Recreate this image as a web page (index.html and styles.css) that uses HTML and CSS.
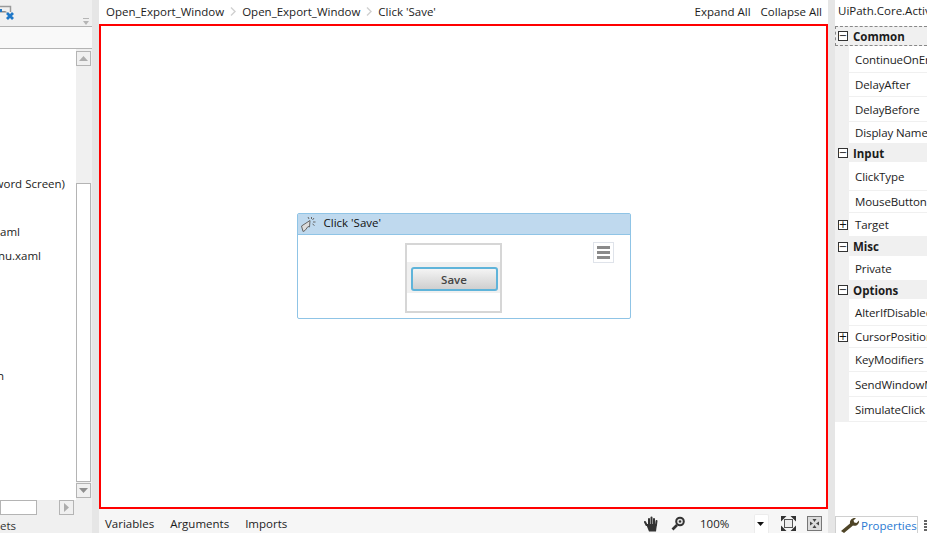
FILE: index.html
```html
<!DOCTYPE html>
<html lang="en">
<head>
  <meta charset="UTF-8" />
  <title>Click 'Save'</title>
  <link rel="stylesheet" href="styles.css">
</head>
<body>
  <div class="app">
    <!-- left panel, cut off by the screenshot -->
    <aside class="project">
      <div class="project-tools">
        <svg class="tool-icon" width="16" height="26" viewBox="0 0 16 26">
          <path d="M0 6.500H10.500V12" fill="none" stroke="#9a9a9a" stroke-width="1.500"/>
          <path d="M0 11h5l3 1.500H0z" fill="#8a8a8a"/>
          <path d="M7 13l6 6M13 13l-6 6" stroke="#1f78c8" stroke-width="2.800" fill="none"/>
          <rect x="0" y="9" width="2" height="3" fill="#1f78c8"/>
        </svg>
        <span class="tool-pin">
          <i></i>
          <svg width="6" height="4" viewBox="0 0 6 4"><path d="M0 0h6L3 4z" fill="#b5b5b5"/></svg>
        </span>
      </div>
      <div class="project-search"></div>
      <div class="project-body">
        <ul class="tree">
          <li></li>
          <li></li>
          <li></li>
          <li></li>
          <li></li>
          <li class="tree-cut cut-65">Keyword Screen)</li>
          <li></li>
          <li class="tree-cut cut-20">Menu.xaml</li>
          <li class="tree-cut cut-41">Main_Menu.xaml</li>
          <li></li>
          <li></li>
          <li></li>
          <li></li>
          <li class="tree-cut cut-4">Open</li>
        </ul>
        <div class="vscroll">
          <span class="scroll-btn"><svg width="9" height="5" viewBox="0 0 9 5"><path d="M4.500 0L9 5H0z" fill="#adadad"/></svg></span>
          <span class="vscroll-track"><span class="vscroll-thumb"></span></span>
          <span class="scroll-btn"><svg width="9" height="5" viewBox="0 0 9 5"><path d="M0 0h9L4.500 5z" fill="#8f8f8f"/></svg></span>
        </div>
      </div>
      <div class="hscroll">
        <span class="hscroll-thumb"></span>
        <span class="scroll-btn"><svg width="5" height="9" viewBox="0 0 5 9"><path d="M0 0l5 4.500L0 9z" fill="#adadad"/></svg></span>
      </div>
      <div class="project-tab tree-cut">Snippets</div>
    </aside>

    <div class="splitter"></div>

    <main class="designer">
      <header class="crumbs">
        <nav class="crumb-path">
          <span>Open_Export_Window</span>
          <svg width="6" height="9" viewBox="0 0 6 9"><path d="M1 .5l4 4-4 4" fill="none" stroke="#d0d0d0" stroke-width="1.400"/></svg>
          <span>Open_Export_Window</span>
          <svg width="6" height="9" viewBox="0 0 6 9"><path d="M1 .5l4 4-4 4" fill="none" stroke="#d0d0d0" stroke-width="1.400"/></svg>
          <span>Click 'Save'</span>
        </nav>
        <div class="crumb-actions">
          <span>Expand All</span>
          <span>Collapse All</span>
        </div>
      </header>

      <section class="canvas">
        <div class="activity">
          <div class="activity-head">
            <svg width="16" height="17" viewBox="0 0 16 17">
              <path d="M9 4.500L.5 10 2 15.500 4 14.500 7 10.500 8.500 11z" fill="#dcdcdc" stroke="#666" stroke-width="1"/>
              <path d="M10.500 1v2M13 2l-1.500 2M14.500 6h-2.500M13.500 9.500l-2-1.500M7 1l1 2" stroke="#666" stroke-width="1" fill="none"/>
            </svg>
            <span class="activity-title">Click 'Save'</span>
          </div>
          <div class="activity-body">
            <div class="preview">
              <div class="preview-band">
                <button class="save-btn">Save</button>
              </div>
            </div>
            <span class="activity-menu"><i></i><i></i><i></i></span>
          </div>
        </div>
      </section>

      <footer class="statusbar">
        <div class="status-tabs">
          <span>Variables</span>
          <span>Arguments</span>
          <span>Imports</span>
        </div>
        <div class="status-tools">
          <svg class="hand" width="14" height="16" viewBox="0 0 14 16">
            <path d="M2.500 9L1 6M5 8V3M7.500 8V1.500M10 8V3M12 9l.5-4" stroke="#333" stroke-width="2" stroke-linecap="round" fill="none"/>
            <path d="M2 8h11l-1 7.500H5z" fill="#333"/>
          </svg>
          <svg class="lens" width="14" height="15" viewBox="0 0 14 15">
            <circle cx="9" cy="5.500" r="3.800" fill="#e2e2e2" stroke="#333" stroke-width="2"/>
            <path d="M6 9l-4.500 4.500" stroke="#333" stroke-width="2.600"/>
            <circle cx="9" cy="5.500" r="1.200" fill="#333"/>
          </svg>
          <span class="zoom-value">100%</span>
          <span class="zoom-drop"><svg width="7" height="4" viewBox="0 0 7 4"><path d="M0 0h7L3.500 4z" fill="#111"/></svg></span>
          <svg class="fit" width="15" height="15" viewBox="0 0 15 15">
            <rect x="3.500" y="3.500" width="8" height="8" fill="#eee" stroke="#555" stroke-width="1"/>
            <path d="M0 0h5.500L0 5.500zM15 0v5.500L9.500 0zM0 15V9.500L5.500 15zM15 15H9.500L15 9.500z" fill="#333"/>
          </svg>
          <svg class="fit-actual" width="15" height="15" viewBox="0 0 15 15">
            <rect x=".5" y=".5" width="14" height="14" fill="#dcdcdc" stroke="#777"/>
            <path d="M7.500 6L5.500 3h4zM7.500 9l2 3h-4zM6 7.500L3 9.500v-4zM9 7.500l3-2v4z" fill="#444"/>
          </svg>
        </div>
      </footer>
    </main>

    <div class="splitter"></div>

    <aside class="props">
      <div class="props-title">UiPath.Core.Activities.Click</div>
      <div class="prop-grid">
        <div class="prop-head prop-head-focus"><span class="box">−</span>Common</div>
        <div class="prop">ContinueOnError</div>
        <div class="prop">DelayAfter</div>
        <div class="prop">DelayBefore</div>
        <div class="prop">Display Name</div>
        <div class="prop-head"><span class="box">−</span>Input</div>
        <div class="prop">ClickType</div>
        <div class="prop">MouseButton</div>
        <div class="prop prop-plus"><span class="box">+</span>Target</div>
        <div class="prop-head"><span class="box">−</span>Misc</div>
        <div class="prop">Private</div>
        <div class="prop-head"><span class="box">−</span>Options</div>
        <div class="prop">AlterIfDisabled</div>
        <div class="prop prop-plus"><span class="box">+</span>CursorPosition</div>
        <div class="prop">KeyModifiers</div>
        <div class="prop">SendWindowMessages</div>
        <div class="prop">SimulateClick</div>
      </div>
      <div class="props-tabs">
        <div class="props-tab">
          <svg width="20" height="16" viewBox="0 0 20 16">
            <path d="M1 14L10 6.500C9.500 3 12 .5 16 1l-2.500 2.500 .8 2 2.200.5L19 3.500C19.500 7.500 16 9.500 13 8.500L4 16z" fill="#4f4527"/>
          </svg>
          <span>Properties</span>
        </div>
        <svg class="next-tab" width="6" height="13" viewBox="0 0 6 13"><path d="M1 1h4M1 4h4M1 7h4M1 10h4" stroke="#333" stroke-width="1.500" fill="none"/></svg>
      </div>
    </aside>
  </div>
</body>
</html>
```

FILE: styles.css
```css
* {
  box-sizing: border-box;
}

html, body {
  margin: 0;
  height: 100%;
  overflow: hidden;
}

body {
  font-family: "Open Sans", "Noto Sans", Arial, sans-serif;
  font-size: 11.5px;
  color: #1c1c1c;
  background: #fff;
}

.app {
  display: grid;
  grid-template-columns: 92px 7px 729px 7px 92px;
  width: 927px;
  height: 533px;
}

.splitter {
  background: #e6e6e6;
}

/* left panel */
.project {
  display: flex;
  flex-direction: column;
  background: #f0f0f0;
  overflow: hidden;
}

.project-tools {
  display: flex;
  justify-content: space-between;
  align-items: flex-start;
  height: 27px;
  padding-right: 3px;
  border-bottom: 1px solid #b4b4b4;
}

.tool-pin {
  display: flex;
  flex-direction: column;
  align-items: center;
  gap: 2px;
  margin-top: 18px;
}

.tool-pin i {
  width: 6px;
  height: 1px;
  background: #b5b5b5;
}

.project-search {
  height: 22px;
  background: #f9f9f9;
  border-bottom: 1px solid #b4b4b4;
}

.project-body {
  display: flex;
  height: 451px;
  background: #f0f0f0;
}

.tree {
  flex: none;
  width: 76px;
  list-style: none;
  margin: 0;
  padding: 3px 0 0;
  background: #fff;
  overflow: hidden;
}

.tree li {
  height: 24px;
  line-height: 24px;
  white-space: nowrap;
}

.tree-cut {
  display: flex;
  justify-content: flex-end;
  white-space: nowrap;
}

.tree li.cut-65 { width: 65px; }
.tree li.cut-20 { width: 20px; }
.tree li.cut-41 { width: 41px; }
.tree li.cut-4 { width: 4px; }

.vscroll {
  display: flex;
  flex-direction: column;
  width: 15px;
  padding: 2px 0;
}

.scroll-btn {
  display: flex;
  align-items: center;
  justify-content: center;
  flex: none;
  width: 15px;
  height: 15px;
  background: #f0f0f0;
  border: 1px solid #b4b4b4;
}

.vscroll-track {
  flex: 1;
  display: flex;
  flex-direction: column;
  justify-content: flex-end;
  padding-bottom: 1px;
}

.vscroll-thumb {
  width: 15px;
  height: 299px;
  background: #fff;
  border: 1px solid #b4b4b4;
}

.hscroll {
  display: flex;
  justify-content: space-between;
  align-items: center;
  height: 15px;
  padding-right: 18px;
}

.hscroll-thumb {
  width: 37px;
  height: 15px;
  background: #fff;
  border: 1px solid #b4b4b4;
}

.project-tab {
  height: 18px;
  line-height: 22px;
  width: 16px;
  color: #333;
}

/* designer */
.designer {
  display: flex;
  flex-direction: column;
  min-width: 0;
}

.crumbs {
  display: flex;
  justify-content: space-between;
  align-items: center;
  height: 24px;
  padding: 0 6px 2px 7px;
}

.crumb-path {
  display: flex;
  align-items: center;
  gap: 6px;
}

.crumb-actions {
  display: flex;
  gap: 10px;
}

.canvas {
  display: flex;
  align-items: center;
  justify-content: center;
  height: 485px;
  border: 2px solid #ff0000;
  background: #fff;
}

.activity {
  width: 334px;
  height: 106px;
  margin-bottom: 1px;
  border: 1px solid #8fc4e6;
  border-radius: 2px;
}

.activity-head {
  display: flex;
  align-items: center;
  gap: 7px;
  height: 21px;
  padding-left: 3px;
  background: #bfd9ee;
  border-bottom: 1px solid #8fc4e6;
  color: #111;
}

.activity-title {
  margin-top: -3px;
}

.activity-body {
  display: flex;
  justify-content: space-between;
  padding: 8px 16px 0 107px;
}

.preview {
  width: 97px;
  height: 70px;
  padding-top: 17px;
  border: 2px solid #d6d6d6;
}

.preview-band {
  height: 31px;
  padding: 5px 3px 0 4px;
  background: #f0f0f0;
}

.save-btn {
  display: block;
  width: 87px;
  height: 24px;
  padding: 0;
  font: 600 11.5px "Open Sans", Arial, sans-serif;
  color: #444;
  background: linear-gradient(#f4f4f4, #cfcfcf);
  border: 2px solid #5fb4da;
  border-radius: 3px;
}

.activity-menu {
  display: flex;
  flex-direction: column;
  justify-content: center;
  gap: 2px;
  width: 21px;
  height: 21px;
  padding: 0 3px;
  margin-top: -1px;
  border: 1px solid #dfe3ea;
}

.activity-menu i {
  height: 3px;
  background: #8a8a8a;
}

.statusbar {
  display: flex;
  justify-content: space-between;
  align-items: center;
  height: 24px;
  padding: 5px 6px 0 6px;
  background: #f6f6f6;
}

.status-tabs {
  display: flex;
  gap: 16px;
}

.status-tools {
  display: flex;
  align-items: center;
}

.lens {
  margin-left: 13px;
}

.zoom-value {
  width: 54px;
  margin-left: 15px;
}

.zoom-drop {
  display: flex;
  align-items: center;
  width: 15px;
  height: 19px;
  padding-left: 2px;
  margin-right: 12px;
  background: #fff;
  border: 1px solid #ececec;
  border-bottom: 0;
  border-radius: 2px 2px 0 0;
}

.fit {
  margin-right: 11px;
}

/* properties */
.props {
  display: flex;
  flex-direction: column;
  overflow: hidden;
  min-width: 0;
}

.props-title {
  height: 26px;
  padding: 2px 0 0 3px;
  line-height: 18px;
  white-space: nowrap;
}

.prop-grid {
  display: grid;
  grid-template-rows: 20px 27px 24px 25px 22px 18px 29px 22px 24px 19px 25px 18px 27px 22px 24px 25px 25px;
  background: linear-gradient(90deg, #f0f0f0 14px, #fff 14px);
}

.prop-head {
  display: flex;
  align-items: center;
  gap: 5px;
  padding-left: 3px;
  font-weight: 700;
  background: #f0f0f0;
  white-space: nowrap;
}

.prop-head-focus {
  border: 1px dashed #888;
  border-right: 0;
  padding-left: 2px;
}

.prop {
  display: flex;
  align-items: center;
  padding-left: 20px;
  white-space: nowrap;
  letter-spacing: -0.1px;
  border-bottom: 1px solid #f0f0f0;
  overflow: hidden;
}

.prop-plus {
  gap: 7px;
  padding-left: 3px;
}

.box {
  display: flex;
  align-items: center;
  justify-content: center;
  flex: none;
  width: 10px;
  height: 10px;
  font: 400 10px/1 "DejaVu Sans", sans-serif;
  color: #111;
  background: #fff;
  border: 1px solid #333;
}

.props-tabs {
  flex: 1;
  display: flex;
  align-items: flex-end;
  justify-content: space-between;
}

.props-tab {
  display: flex;
  align-items: center;
  gap: 1px;
  height: 17px;
  width: 83px;
  padding-left: 4px;
  color: #2a7ad2;
  background: #fff;
  border: 1px solid #d0d0d0;
  border-bottom: 0;
}

.next-tab {
  margin-right: -2px;
}
```
